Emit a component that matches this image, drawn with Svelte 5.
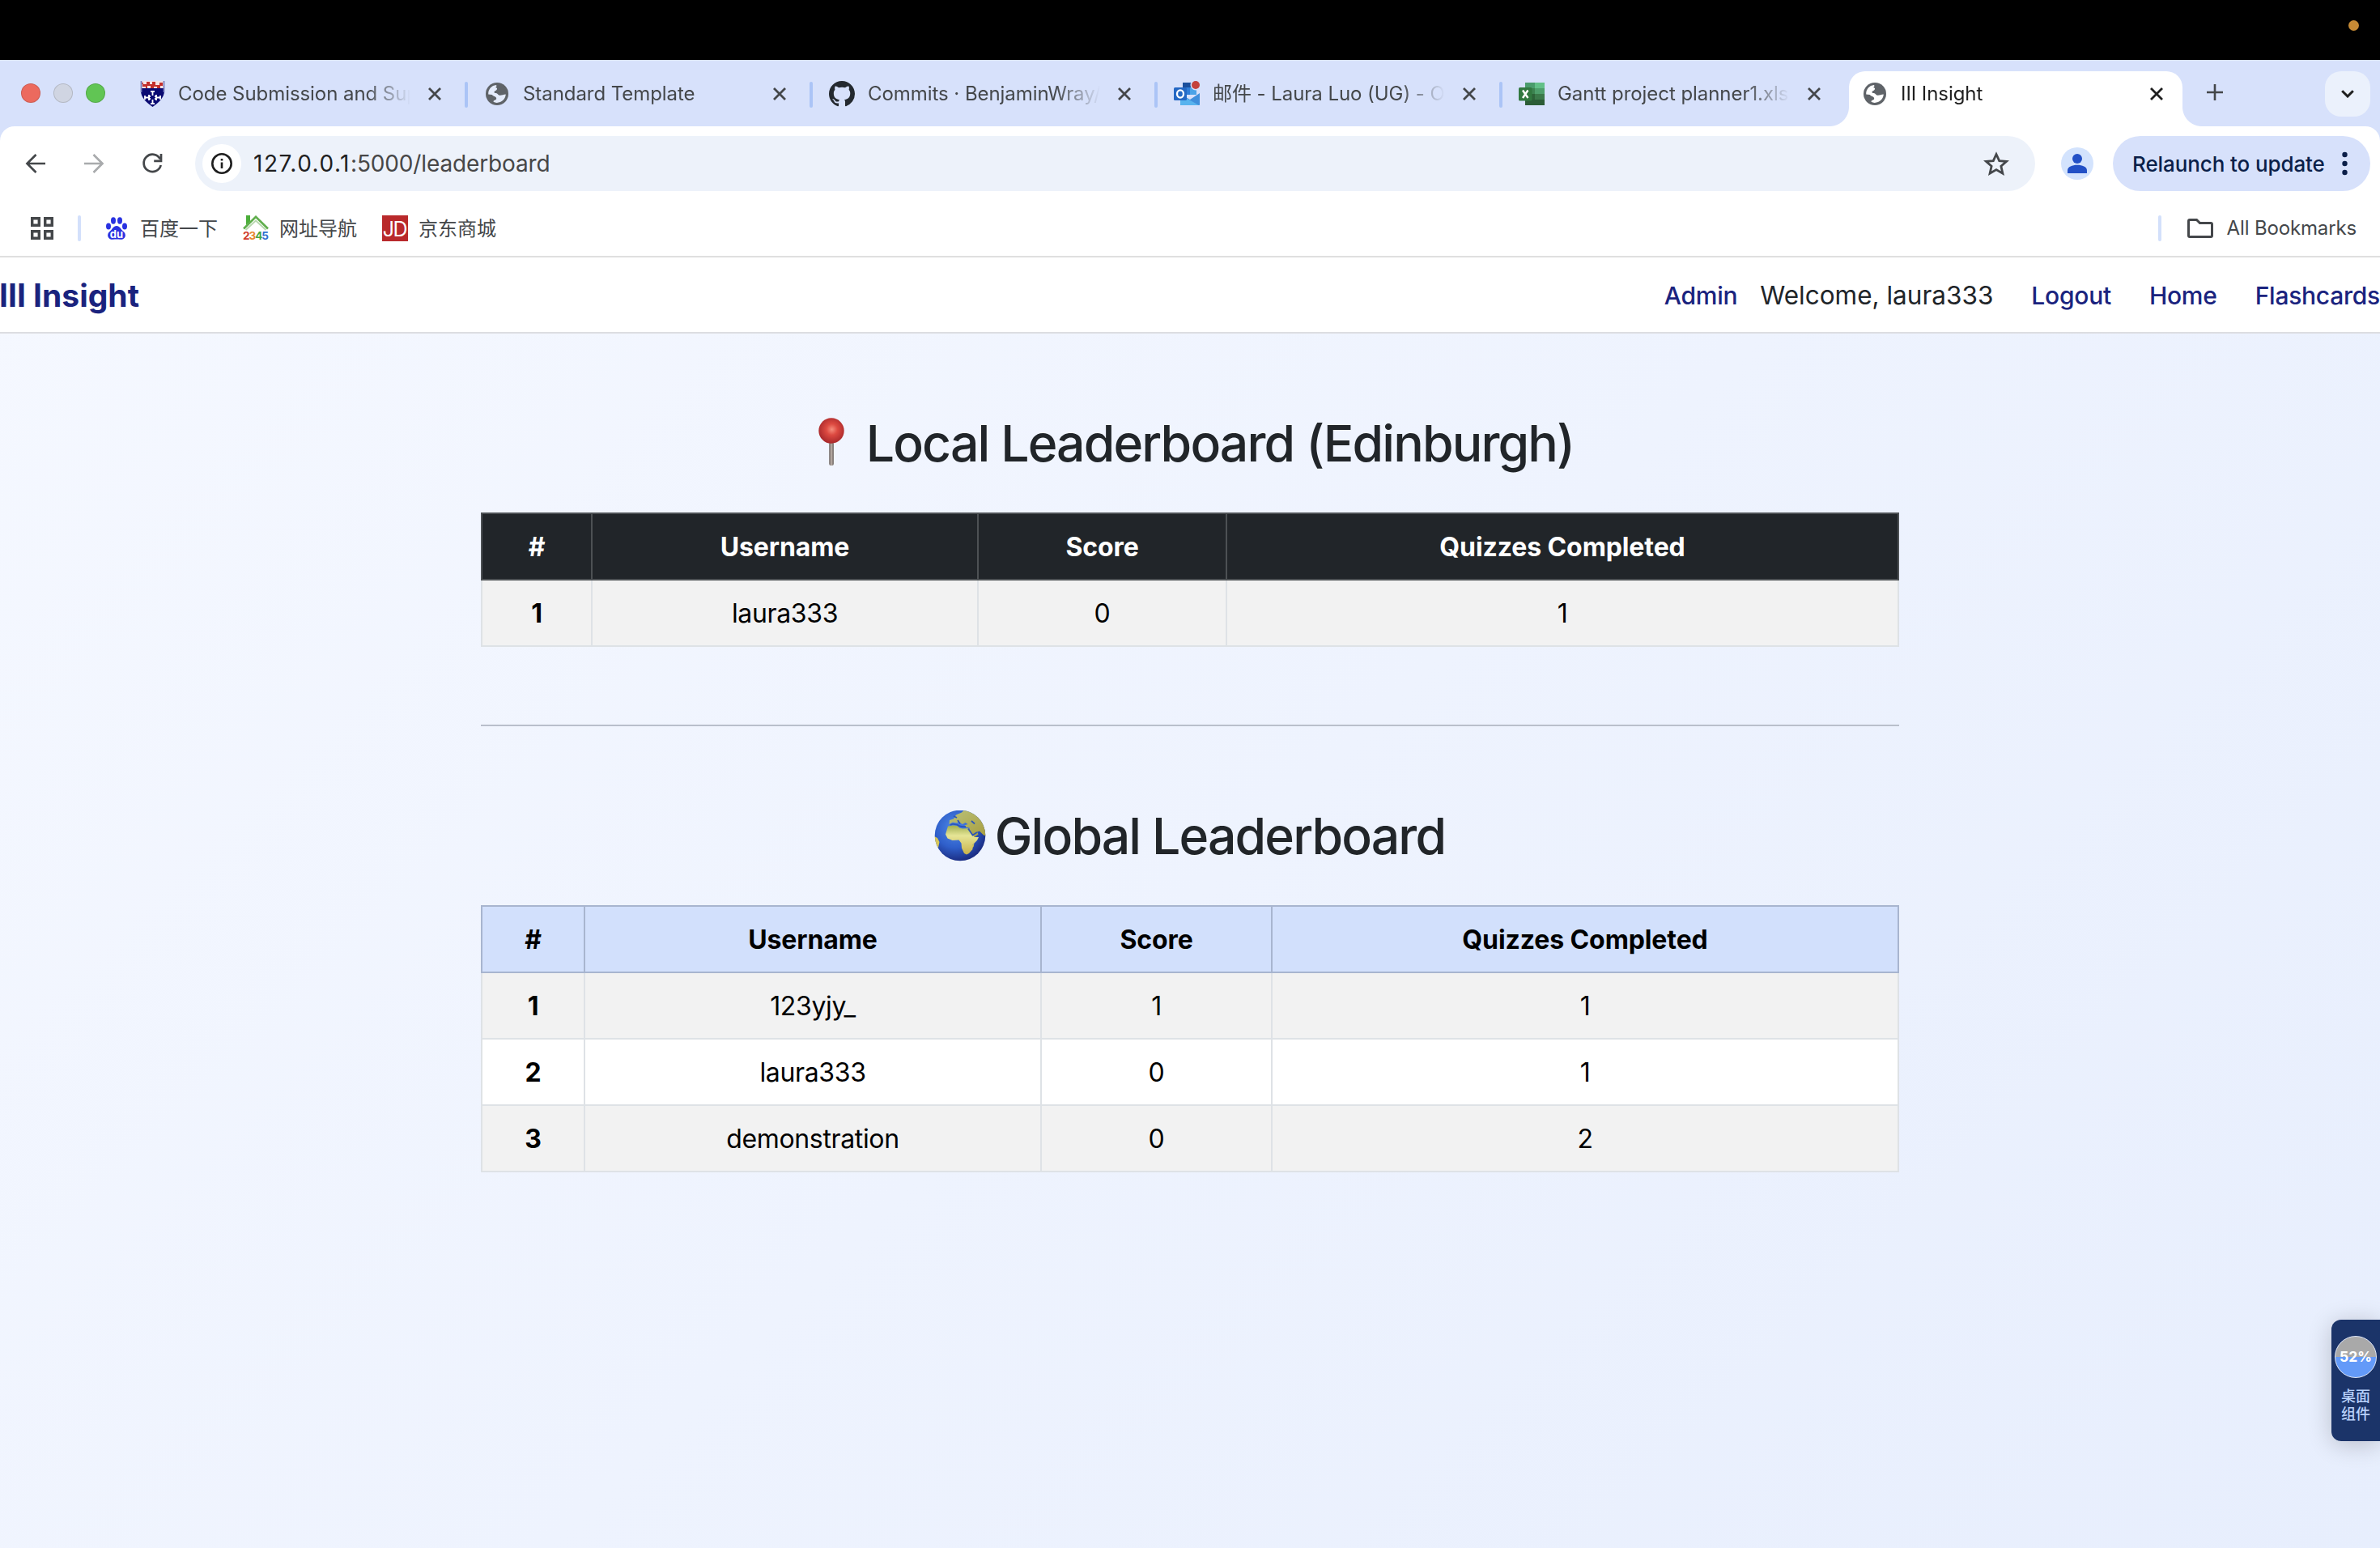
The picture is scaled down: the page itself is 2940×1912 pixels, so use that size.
<script>
  const tabs = [
    { icon: 'shield', title: 'Code Submission and Sup' },
    { icon: 'globe', title: 'Standard Template' },
    { icon: 'github', title: 'Commits · BenjaminWray/' },
    { icon: 'outlook', title: '邮件 - Laura Luo (UG) - O' },
    { icon: 'excel', title: 'Gantt project planner1.xls' },
    { icon: 'globe', title: 'III Insight', active: true }
  ];

  const bookmarks = [
    { icon: 'baidu', label: '百度一下' },
    { icon: 'nav2345', label: '网址导航' },
    { icon: 'jd', label: '京东商城' }
  ];

  const columns = ['#', 'Username', 'Score', 'Quizzes Completed'];
  const localRows = [{ name: 'laura333', score: 0, quizzes: 1 }];
  const globalRows = [
    { name: '123yjy_', score: 1, quizzes: 1 },
    { name: 'laura333', score: 0, quizzes: 1 },
    { name: 'demonstration', score: 0, quizzes: 2 }
  ];
</script>

{#snippet icon(name)}
  {#if name === 'globe'}
    <svg class="i28" viewBox="0 0 28 28">
      <circle cx="14" cy="14" r="14" fill="#5f6368" />
      <path class="land" d="M3.2 14.4C3 8.3 7.3 3.600 13 3.100c.8 1.200.3 2.300-.9 2.900 2 .3 2.600 1.500 1.400 2.900-1 1.100-2.700 1.100-3 2.500-.2 1.300.9 1.300 2.300 1.600 2 .4 2.300 2 3.600 2.500 2.600.8 4.800-.7 8.400-.9-.3 5.700-5.200 10.400-11.100 10.300-1.600-.1-3-.5-4.200-1.100 0-1.900 1.900-1.900 3.100-2.700.9-.7.700-2-.2-3.100-1.200-1.600-3.600-1.100-4.600-3.100z" />
    </svg>
  {:else if name === 'shield'}
    <svg class="i32" viewBox="0 0 32 32">
      <path d="M2 0h29v12c0 8-6 14-14.500 20C8 26 2 20 2 12z" fill="#0a0a72" />
      <path d="M2 0h29v9H2z" fill="#f3e3e6" />
      <path d="M2 2h3v2h4V1h4v3h3V1h4v4h5V2h4v4h-3v3h-4V7h-4v2h-4V6h-4v3H8V7H4V4z" fill="#c3302c" />
      <path d="M14 13h5M16.500 13v5M14 28h5M16.500 23v5M7 18v5M7 20.500h6M26 18v5M26 20.500h-6M12 17v2h2M21 17v2h-2M12 24v-2h2M21 24v-2h-2" stroke="#fff" stroke-width="1.800" fill="none" />
      <path d="M2.500 0v14M30.500 0v14" stroke="#7a7fbd" stroke-width="1.800" />
    </svg>
  {:else if name === 'github'}
    <svg class="i32" viewBox="0 0 16 16">
      <path fill="#24292f" d="M8 0C3.58 0 0 3.58 0 8c0 3.54 2.29 6.53 5.47 7.59.4.07.55-.17.55-.38 0-.19-.01-.82-.01-1.49-2.01.37-2.53-.49-2.69-.94-.09-.23-.48-.94-.82-1.13-.28-.15-.68-.52-.01-.53.63-.01 1.08.58 1.23.82.72 1.21 1.87.87 2.33.66.07-.52.28-.87.51-1.07-1.78-.2-3.64-.89-3.64-3.95 0-.87.31-1.59.82-2.15-.08-.2-.36-1.02.08-2.12 0 0 .67-.21 2.2.82.64-.18 1.32-.27 2-.27.68 0 1.36.09 2 .27 1.53-1.04 2.2-.82 2.2-.82.44 1.1.16 1.92.08 2.12.51.56.82 1.27.82 2.15 0 3.07-1.87 3.75-3.65 3.95.29.25.54.73.54 1.48 0 1.07-.01 1.93-.01 2.2 0 .21.15.46.55.38A8.013 8.013 0 0016 8c0-4.42-3.58-8-8-8z" />
    </svg>
  {:else if name === 'outlook'}
    <svg class="i32" viewBox="0 0 32 32">
      <path d="M11 2h17v15H11z" fill="#1a4f9c" />
      <path d="M11 8h9v9h-9z" fill="#2f7ed8" /><path d="M20 8h8v9h-8z" fill="#4aa3e8" />
      <path d="M8 16l12 7 12-8v14c0 .6-.4 1-1 1H9c-.6 0-1-.4-1-1z" fill="#3f8fdc" />
      <path d="M8 17l23 13H9c-.6 0-1-.4-1-1z" fill="#58b3ee" />
      <rect y="8" width="16" height="16" rx="1.5" fill="#2468c4" />
      <ellipse cx="8" cy="16" rx="4" ry="4.600" fill="none" stroke="#fff" stroke-width="2.300" />
      <circle cx="27" cy="5" r="6.500" fill="#d7e1fb" /><circle cx="27" cy="5" r="5" fill="#c4433d" />
    </svg>
  {:else if name === 'excel'}
    <svg class="i32" viewBox="0 0 32 32">
      <path d="M8 2h12v7H8z" fill="#4a9c6c" /><path d="M20 2h12v7H20z" fill="#63c088" />
      <path d="M8 9h12v7H8z" fill="#3c8350" /><path d="M20 9h12v7H20z" fill="#4e9f6b" />
      <path d="M8 16h12v7H8z" fill="#2c6338" /><path d="M20 16h12v7H20z" fill="#3b7a4a" />
      <path d="M8 23h24v7H8z" fill="#2b5c36" />
      <rect y="8" width="16.500" height="16.500" rx="1.500" fill="#31783f" />
      <path d="M5 11.500l6.500 9.500M11.500 11.500L5 21" stroke="#fff" stroke-width="2.400" />
    </svg>
  {:else if name === 'baidu'}
    <svg class="i28" viewBox="0 0 28 28">
      <g fill="#2932e1">
        <ellipse cx="4" cy="11.500" rx="3" ry="4" /><ellipse cx="10" cy="4.500" rx="3" ry="4.200" />
        <ellipse cx="18" cy="4.500" rx="3" ry="4.200" /><ellipse cx="24" cy="11.500" rx="3" ry="4" />
        <path d="M14 11c4 0 5 4 8 6.500 2.500 2 3.500 4.500 2.500 7-1 2.800-3.500 3.500-6 3.300-3-.3-6-.3-9 0-2.500.2-5-.5-6-3.300-1-2.500 0-5 2.500-7C9 15 10 11 14 11z" />
      </g>
      <text x="14" y="26" class="du">du</text>
    </svg>
  {:else if name === 'nav2345'}
    <svg class="i32" viewBox="0 0 32 32">
      <path d="M4 0h5v8l-5 4z" fill="#4cae3a" />
      <path d="M1 16.500L16 1.800l15 14.700" fill="none" stroke="#5fae4c" stroke-width="2.600" />
      <path d="M3.500 18L16 6.500 28.500 18" fill="none" stroke="#b9d8b0" stroke-width="2" />
      <text y="30" class="digits" textLength="32"><tspan fill="#cf3b2b">2</tspan><tspan fill="#e8862e">3</tspan><tspan fill="#48a53c">4</tspan><tspan fill="#2f6fd0">5</tspan></text>
    </svg>
  {:else if name === 'jd'}
    <svg class="i32" viewBox="0 0 32 32">
      <rect width="32" height="32" fill="#b9292b" />
      <text x="15.500" y="25.500" class="jdtext">JD</text>
    </svg>
  {/if}
{/snippet}

{#snippet close()}
  <svg class="close" viewBox="0 0 16 16"><path d="M1 1l14 14M15 1L1 15" /></svg>
{/snippet}

{#snippet board(rows, variant)}
  <table class="board {variant}">
    <colgroup><col class="rank" /><col class="user" /><col class="score" /><col /></colgroup>
    <thead>
      <tr>{#each columns as c}<th>{c}</th>{/each}</tr>
    </thead>
    <tbody>
      {#each rows as row, i}
        <tr>
          <th>{i + 1}</th>
          <td>{row.name}</td>
          <td>{row.score}</td>
          <td>{row.quizzes}</td>
        </tr>
      {/each}
    </tbody>
  </table>
{/snippet}

<div class="screen">
  <div class="menubar"><span class="rec"></span></div>

  <div class="tabstrip">
    <div class="lights"><i class="red"></i><i class="grey"></i><i class="green"></i></div>
    {#each tabs as tab, i}
      <div class="tab" class:active={tab.active} class:divided={i < tabs.length - 2}>
        <span class="fav">{@render icon(tab.icon)}</span>
        <span class="title">{tab.title}</span>
        {@render close()}
      </div>
    {/each}
    <svg class="plus" viewBox="0 0 20 20"><path d="M10 0v20M0 10h20" /></svg>
    <div class="dropdown"><svg viewBox="0 0 16 10"><path d="M1.200 1.200L8 8l6.800-6.800" /></svg></div>
  </div>

  <div class="toolbar-wrap">
    <div class="toolbar">
      <svg class="nav-icon" viewBox="0 0 24 24"><path d="M24 12H2M12.500 1L1.500 12l11 11" /></svg>
      <svg class="nav-icon off" viewBox="0 0 24 24"><path d="M0 12h22M11.500 1l11 11-11 11" /></svg>
      <svg class="nav-icon" viewBox="0 0 24 24"><path d="M21.800 6.500A10.700 10.700 0 1 0 22.700 14M23 0v8.800h-8.800" /></svg>
      <div class="omnibox">
        <span class="info">
          <svg viewBox="0 0 26 26"><circle cx="13" cy="13" r="11.700" /><path d="M13 11.500v7.500M13 7v2.600" /></svg>
        </span>
        <span class="url"><b>127.0.0.1</b>:5000/leaderboard</span>
        <svg class="star" viewBox="0 0 32 30"><path d="M16 3.500l3.700 8.100 8.900.8-6.700 5.900 2 8.800L16 22.500l-7.900 4.600 2-8.800-6.700-5.900 8.900-.8z" /></svg>
      </div>
      <svg class="profile" viewBox="0 0 40 40">
        <circle cx="20" cy="20" r="20" fill="#d3e3fd" />
        <circle cx="20" cy="14" r="6" fill="#2250c6" />
        <path d="M8 32v-3.500C8 24 14 21.800 20 21.800S32 24 32 28.500V32z" fill="#2250c6" />
      </svg>
      <div class="relaunch"><span>Relaunch to update</span>
        <svg viewBox="0 0 7 30"><circle cx="3.500" cy="4" r="3.200" /><circle cx="3.500" cy="15" r="3.200" /><circle cx="3.500" cy="26" r="3.200" /></svg>
      </div>
    </div>
  </div>

  <div class="bookmarks">
    <svg class="apps" viewBox="0 0 28 28"><path d="M1.700 1.700h8.600v8.600H1.700zM17.700 1.700h8.600v8.600h-8.600zM1.700 17.700h8.600v8.600H1.700zM17.700 17.700h8.600v8.600h-8.600z" /></svg>
    <i class="bar"></i>
    {#each bookmarks as b}
      <div class="bm"><span class="bm-icon">{@render icon(b.icon)}</span><span class="bm-label">{b.label}</span></div>
    {/each}
    <i class="bar right"></i>
    <svg class="folder" viewBox="0 0 32 24"><path d="M3 1.500h8.500l4 4H29c.8 0 1.500.7 1.500 1.500v14c0 .8-.7 1.500-1.500 1.500H3c-.8 0-1.500-.7-1.500-1.500V3c0-.8.7-1.500 1.500-1.500z" /></svg>
    <span class="all">All Bookmarks</span>
  </div>

  <div class="page">
    <nav>
      <span class="brand">III Insight</span>
      <span class="link">Admin</span>
      <span class="welcome">Welcome, laura333</span>
      <span class="link logout">Logout</span>
      <span class="link home">Home</span>
      <span class="link">Flashcards</span>
    </nav>

    <main>
      <h2>
        <svg class="emoji" viewBox="0 0 64 64">
          <defs>
            <radialGradient id="pin" cx=".52" cy=".45" r=".55"><stop offset="0" stop-color="#f58d7c" /><stop offset=".4" stop-color="#dd4a41" /><stop offset="1" stop-color="#a8282b" /></radialGradient>
            <linearGradient id="rod"><stop offset="0" stop-color="#5f5652" /><stop offset=".5" stop-color="#c0b4ac" /><stop offset="1" stop-color="#5f5652" /></linearGradient>
          </defs>
          <rect x="29.300" y="30" width="5.500" height="29" rx="2" fill="url(#rod)" />
          <circle cx="32" cy="16" r="15.700" fill="url(#pin)" />
        </svg>
        <span>Local Leaderboard (Edinburgh)</span>
      </h2>
      {@render board(localRows, 'dark')}
      <div class="rule"></div>
      <h2>
        <svg class="emoji" viewBox="0 0 64 64">
          <defs>
            <radialGradient id="sea" cx=".4" cy=".35" r=".65"><stop offset="0" stop-color="#4f8ae8" /><stop offset=".6" stop-color="#2f5fca" /><stop offset="1" stop-color="#1c2f86" /></radialGradient>
            <linearGradient id="soil" x2="0" y2="1"><stop offset="0" stop-color="#9fae4f" /><stop offset=".35" stop-color="#e6e596" /><stop offset="1" stop-color="#c9b24a" /></linearGradient>
            <linearGradient id="north" x2="1" y2="1"><stop offset="0" stop-color="#b9c27a" /><stop offset="1" stop-color="#a89d3e" /></linearGradient>
            <clipPath id="disc"><circle cx="32" cy="31" r="31.300" /></clipPath>
          </defs>
          <circle cx="32" cy="31" r="31.300" fill="url(#sea)" />
          <g clip-path="url(#disc)">
            <path fill="url(#soil)" d="M17 19.500l6-1 6 .5 2 2.500 4 1 8-.5 3 6 4.500 5h4.500l-2 4-5.500 5.500v5.500l-4.500 5-3 1.500-3-1.500-3-6.500-.5-6-3-4-8 .5-6-2.500-2.500-5z" />
            <path fill="url(#north)" d="M18.500 17l.5-5 5-1.500 3-5 7-3 3-3h12l14 15 2 17-4-1-5-5-3 1 1.500 3-5 3.500-5-7-1-4.500-5-1-1-2 4-1.500-3-2-3.500 2-5-3-2 1.500-5-1z" />
            <path fill="#d6c65a" d="M0 32l4 2 2.500 5-1.500 7-5 2zM46.500 43.500l3-3-1 4.500-2.500 2z" />
            <path d="M20 18c3-2.500 5-.5 8-.5 3 2.500 6 3 11 2.500M29 12l3 4.500M46 13l4 3.500M42 22.500l5.500 8 5.500-3.500M24 7l4 2" stroke="#2c55ba" stroke-width="1.800" fill="none" />
          </g>
        </svg>
        <span>Global Leaderboard</span>
      </h2>
      {@render board(globalRows, 'primary')}
    </main>
  </div>

  <div class="widget">
    <span class="gauge">52%</span>
    <span>桌面</span>
    <span>组件</span>
  </div>
</div>

<style>
  :global(body) { margin: 0; background: #eaf1fe; }
  .screen {
    position: relative;
    width: 2940px;
    height: 1912px;
    overflow: hidden;
    display: flex;
    flex-direction: column;
    font-family: Inter, "Noto Sans CJK SC", sans-serif;
    color: #212529;
  }
  .screen * { box-sizing: border-box; }
  svg { display: block; flex: none; }
  span { white-space: nowrap; }

  .menubar { height: 74px; background: #000; display: flex; justify-content: flex-end; padding: 25px 26px 0 0; flex: none; }
  .rec { width: 13px; height: 13px; border-radius: 50%; background: #c68a35; }

  .tabstrip { height: 82px; flex: none; background: #d7e1fb; display: flex; align-items: flex-start; padding: 14px 12px 0 26px; }
  .lights { display: flex; gap: 16px; width: 124px; padding-top: 15px; }
  .lights i { width: 24px; height: 24px; border-radius: 50%; border: 1px solid #0002; }
  .red { background: #ec6a5e; }
  .grey { background: #d0d5e2; }
  .green { background: #61c554; }
  .tab { position: relative; width: 426px; height: 68px; padding: 0 30px 13px 22px; display: flex; align-items: center; flex: none; }
  .tab.divided::after {
    content: ""; position: absolute; right: -2px; top: 13px; width: 4px; height: 32px; border-radius: 2px; background: #abc4f6;
  }
  .fav { width: 32px; display: flex; justify-content: center; margin-right: 16px; flex: none; }
  .i28 { width: 28px; height: 28px; }
  .i32 { width: 32px; height: 32px; }
  .land { fill: #e4ebfb; }
  .title { width: 290px; margin-right: 19px; flex: none; overflow: hidden; font-size: 24px; line-height: 34px; letter-spacing: -.06px; color: #44474a; mask-image: linear-gradient(to right, #000 232px, transparent 287px); }
  .close { width: 16px; height: 16px; fill: none; stroke: #44474a; stroke-width: 2.8; }
  .tab.active { width: 412px; margin-left: 4px; padding: 0 20px 13px 16px; background: #fff; border-radius: 20px 20px 0 0; }
  .tab.active .title { color: #1f1f1f; margin-right: 18px; }
  .tab.active .close { stroke: #1f1f1f; }
  .tab.active .land { fill: #fff; }
  .tab.active::before, .tab.active::after {
    content: ""; position: absolute; bottom: 0; width: 24px; height: 24px;
  }
  .tab.active::before { left: -24px; background: radial-gradient(circle at 0 0, transparent 23.5px, #fff 24.5px); }
  .tab.active::after { right: -24px; background: radial-gradient(circle at 100% 0, transparent 23.5px, #fff 24.5px); }
  .plus { width: 20px; height: 20px; margin: 16px 0 0 30px; stroke: #44474a; stroke-width: 2.6; }
  .dropdown { margin-left: auto; width: 56px; height: 56px; border-radius: 20px; background: #ebf1fc; display: flex; align-items: center; justify-content: center; }
  .dropdown svg { width: 16px; height: 10px; fill: none; stroke: #1f1f1f; stroke-width: 3; }

  .toolbar-wrap { background: #d7e1fb; flex: none; }
  .toolbar { height: 92px; background: #fff; border-radius: 18px 18px 0 0; display: flex; align-items: center; padding: 0 12px 0 32px; }
  .nav-icon { width: 24px; height: 24px; margin-right: 48px; fill: none; stroke: #44474a; stroke-width: 2.7; overflow: visible; }
  .nav-icon.off { stroke: #a9abad; }
  .omnibox { width: 2273px; height: 68px; margin-left: -7px; border-radius: 34px; background: #edf2fa; display: flex; align-items: center; padding: 0 32px 0 9px; }
  .info { width: 48px; height: 48px; border-radius: 50%; background: #fff; display: flex; align-items: center; justify-content: center; margin-right: 15px; }
  .info svg { width: 26px; height: 26px; fill: none; stroke: #1f1f1f; stroke-width: 2.6; }
  .url { font-size: 28px; color: #474747; letter-spacing: -.14px; }
  .url b { font-weight: 400; color: #1f1f1f; letter-spacing: 1.5px; }
  .star { width: 32px; height: 30px; margin-left: auto; fill: none; stroke: #44474a; stroke-width: 2.8; }
  .profile { width: 40px; height: 40px; margin: 0 24px 0 32px; }
  .relaunch { width: 318px; height: 68px; border-radius: 34px; background: #d7e1fb; display: flex; align-items: center; padding: 0 28px 0 24px; font-size: 26px; font-weight: 500; letter-spacing: -.1px; color: #0b1f49; justify-content: space-between; }
  .relaunch svg { width: 7px; height: 30px; fill: #0b1f49; }

  .bookmarks { height: 70px; flex: none; background: #fff; border-bottom: 2px solid #dfdfdf; display: flex; align-items: center; padding: 0 29px 0 38px; font-size: 24px; color: #44474a; }
  .apps { width: 28px; height: 28px; fill: none; stroke: #44474a; stroke-width: 3.4; }
  .bar { width: 4px; height: 32px; border-radius: 2px; background: #d3e0fb; margin: 0 28px 0 30px; }
  .bm { display: flex; align-items: center; margin-right: 31px; height: 34px; }
  .bm-icon { width: 32px; display: flex; justify-content: center; margin-right: 12px; }
  .bm-label { margin: 0 0 4px 1px; }
  .bar.right { margin-left: auto; margin-right: 32px; }
  .folder { width: 32px; height: 24px; fill: none; stroke: #44474a; stroke-width: 3; margin-right: 17px; }
  .all { letter-spacing: -.15px; margin-bottom: 2px; }
  .du { font: 700 13px Inter, sans-serif; fill: #fff; text-anchor: middle; }
  .digits { font: 700 13.5px Inter, sans-serif; }
  .jdtext { font: 400 25px Inter, sans-serif; fill: #fff; text-anchor: middle; letter-spacing: -1.5px; }

  .page { flex: 1; background: linear-gradient(135deg, #f5f8ff, #e7eefd); }
  nav { height: 94px; background: #fff; border-bottom: 2px solid #dcdde1; display: flex; align-items: center; padding-top: 2px; font-size: 30px; font-weight: 500; }
  .brand { font-size: 39px; font-weight: 700; color: #1a237e; margin: 0 auto 2px -1px; }
  .link { color: #1a237e; letter-spacing: -.25px; }
  .welcome { font-size: 31.5px; font-weight: 400; margin: 0 47px 2px 28px; }
  .logout, .home { margin-right: 47px; }

  main { width: 1752px; margin: 0 auto; padding-top: 96px; }
  h2 { margin: 0 0 48px; height: 77px; padding: 2px 1px 0 0; display: flex; align-items: center; justify-content: center; font-size: 62.5px; line-height: 75px; font-weight: 500; letter-spacing: -1.87px; }
  .emoji { width: 64px; height: 64px; margin-right: 11px; }
  .rule { height: 2px; background: #b9bfcb; margin: 96px 0; }

  .board { width: 1752px; table-layout: fixed; border-spacing: 0; font-size: 32px; line-height: 48px; color: #000; text-align: center; }
  .board th, .board td { height: 82px; padding: 2px 0 0; border: solid #dee2e6; border-width: 0 2px 2px 0; }
  .board td { letter-spacing: -.35px; }
  .board tr > :first-child { border-left-width: 2px; }
  .board thead th { height: 84px; border-top-width: 2px; }
  .board th { font-weight: 700; letter-spacing: -.1px; }
  .board tbody tr { background: #fff; }
  .board tbody tr:nth-child(odd) { background: #f2f2f2; }
  .dark thead th { background: #212529; color: #fff; border-color: #4d5154; }
  .primary thead th { background: #d2e0fc; border-color: #a8b5cf; }
  .dark .rank { width: 138px; }
  .dark .user { width: 477px; }
  .dark .score { width: 307px; }
  .primary .rank { width: 129px; }
  .primary .user { width: 564px; }
  .primary .score { width: 285px; }

  .widget { position: absolute; right: 0; top: 1630px; width: 60px; height: 150px; border-radius: 12px 0 0 12px; background: #1b3469; box-shadow: 0 4px 30px #0003; display: flex; flex-direction: column; align-items: center; padding-top: 20px; color: #b9d2fb; font-size: 18px; line-height: 22px; font-weight: 500; }
  .gauge { width: 52px; height: 52px; border-radius: 50%; border: 1.5px solid #dfe7f8; background: linear-gradient(#a9a9a9 49%, #639af8 49%); color: #fff; font-weight: 700; font-size: 17.5px; line-height: 49px; text-align: center; margin-bottom: 12px; }
</style>
